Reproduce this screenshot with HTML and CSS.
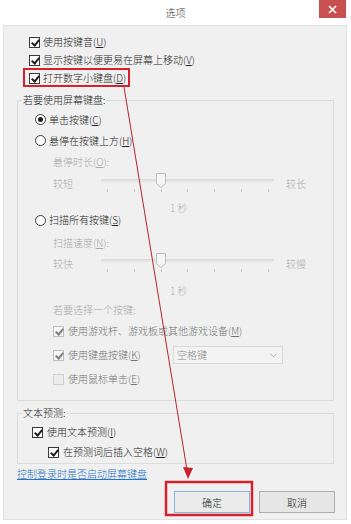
FILE: index.html
```html
<!DOCTYPE html>
<html>
<head>
<meta charset="utf-8">
<link rel="stylesheet" href="styles.css">
</head>
<body>
<div class="window">
  <div class="titlebar">
    <span class="title">选项</span>
    <div class="close"><svg width="9" height="9" viewBox="0 0 9 9"><path d="M1 1L8 8M8 1L1 8" stroke="#fff" stroke-width="1.6"/></svg></div>
  </div>
  <div class="client">
    <div class="topchecks">
      <div class="row"><span class="cb checked"></span>使用按键音(<u>U</u>)</div>
      <div class="row"><span class="cb checked"></span>显示按键以便更易在屏幕上移动(<u>V</u>)</div>
      <div class="row"><span class="cb checked"></span>打开数字小键盘(<u>D</u>)</div>
    </div>

    <fieldset class="group g1">
      <legend>若要使用屏幕键盘:</legend>
      <div class="row radio first"><span class="rb on"></span>单击按键(<u>C</u>)</div>
      <div class="row radio"><span class="rb"></span>悬停在按键上方(<u>H</u>)</div>
      <div class="row sublabel h22">悬停时长(<u>O</u>):</div>
      <div class="slider">
        <span class="end">较短</span>
        <div class="track-area">
          <div class="track"></div>
          <svg class="thumb" width="10" height="15" viewBox="0 0 10 15"><path d="M0.5 0.5H9.5V10.5L5 14.5L0.5 10.5Z" fill="#f6f6f6" stroke="#bcbcbc"/></svg>
          <div class="ticks"><i></i><i></i><i></i><i></i><i></i><i></i><i></i></div>
        </div>
        <span class="end right">较长</span>
      </div>
      <div class="sec">1 秒</div>
      <div class="row radio r3"><span class="rb"></span>扫描所有按键(<u>S</u>)</div>
      <div class="row sublabel h20 mt7">扫描速度(<u>N</u>):</div>
      <div class="slider">
        <span class="end">较快</span>
        <div class="track-area">
          <div class="track"></div>
          <svg class="thumb" width="10" height="15" viewBox="0 0 10 15"><path d="M0.5 0.5H9.5V10.5L5 14.5L0.5 10.5Z" fill="#f6f6f6" stroke="#bcbcbc"/></svg>
          <div class="ticks"><i></i><i></i><i></i><i></i><i></i><i></i><i></i></div>
        </div>
        <span class="end right">较慢</span>
      </div>
      <div class="sec mt3">1 秒</div>
      <div class="row sublabel h19 mt3">若要选择一个按键:</div>
      <div class="row dimcheck"><span class="cb dis checked"></span>使用游戏杆、游戏板或其他游戏设备(<u>M</u>)</div>
      <div class="row dimcheck"><span class="cb dis checked"></span><span class="kbtext">使用键盘按键(<u>K</u>)</span>
        <div class="dd"><span>空格键</span><svg width="7" height="5" viewBox="0 0 7 5"><path d="M0.5 0.8L3.5 3.8L6.5 0.8" fill="none" stroke="#a8a8a8"/></svg></div>
      </div>
      <div class="row dimcheck"><span class="cb dis"></span>使用鼠标单击(<u>E</u>)</div>
    </fieldset>

    <fieldset class="group g2">
      <legend>文本预测:</legend>
      <div class="row pred first"><span class="cb checked"></span>使用文本预测(<u>I</u>)</div>
      <div class="row pred indent"><span class="cb checked"></span>在预测词后插入空格(<u>W</u>)</div>
    </fieldset>

    <a class="link" href="#">控制登录时是否启动屏幕键盘</a>

    <div class="buttons">
      <button class="btn default">确定</button>
      <button class="btn">取消</button>
    </div>
  </div>

  <svg class="annot" width="351" height="524" viewBox="0 0 351 524">
    <rect x="24" y="69" width="105" height="17" fill="none" stroke="#d4222c" stroke-width="2"/>
    <rect x="166" y="482" width="86" height="33" fill="none" stroke="#d4222c" stroke-width="2.5"/>
    <line x1="124" y1="87" x2="187" y2="470" stroke="#b5262c" stroke-width="1"/>
    <polygon points="183,467 193,468 188,479" fill="#c8242c"/>
  </svg>
</div>
</body>
</html>
```
FILE: styles.css
```css
* { box-sizing: border-box; }
html, body { margin: 0; padding: 0; }
body {
  width: 351px;
  height: 524px;
  overflow: hidden;
  background: #fff;
  font-family: "Noto Sans CJK SC", "Microsoft YaHei", sans-serif;
  font-size: 10px;
  font-weight: 300;
  color: #1c1c1c;
}
u { text-decoration: underline; text-underline-offset: 1px; }
.window { position: relative; width: 351px; height: 524px; background: #fff; }
.titlebar {
  height: 25px;
  display: flex;
  align-items: center;
  justify-content: center;
  background: #fff;
  position: relative;
}
.title { font-size: 10px; color: #3a3a3a; line-height: 24px; }
.close {
  position: absolute;
  top: 0;
  right: 5px;
  width: 27px;
  height: 18px;
  background: #c85150;
  display: flex;
  align-items: center;
  justify-content: center;
}
.client {
  margin: 0 4px 0 3px;
  height: 495px;
  background: #f0f0f0;
  border: 1px solid #e1e1e1;
  padding: 7px 12px 0 13px;
}
.row { display: flex; align-items: center; white-space: nowrap; line-height: 14px; }
.topchecks { padding-left: 12px; }
.topchecks .row { height: 18px; }

.cb {
  flex: none;
  width: 11px;
  height: 11px;
  border: 1px solid #3a3a3a;
  background: #fff;
  margin-right: 3px;
  position: relative;
}
.cb.checked::after {
  content: "";
  position: absolute;
  left: 3px;
  top: 0px;
  width: 3px;
  height: 6px;
  border: solid #1e1e1e;
  border-width: 0 2px 2px 0;
  transform: rotate(40deg);
}
.cb.dis { border-color: #bdbdbd; background: #f7f7f7; }
.cb.dis.checked::after { border-color: #7c7c7c; }
.cb.dis:not(.checked) { background: #ececec; border-color: #d0d0d0; }

.rb {
  flex: none;
  width: 11px;
  height: 11px;
  border: 1px solid #3a3a3a;
  border-radius: 50%;
  background: #fff;
  margin-right: 3px;
  display: flex;
  align-items: center;
  justify-content: center;
}
.rb.on::after {
  content: "";
  width: 5px;
  height: 5px;
  border-radius: 50%;
  background: #1e1e1e;
}

.group {
  margin: 6px 0 0;
  padding: 0;
  border: 1px solid #dcdcdc;
  min-width: 0;
}
.group legend {
  margin-left: 4px;
  padding: 0 1px;
  line-height: 14px;
  height: 14px;
  color: #1c1c1c;
}
.g1 { padding-bottom: 9px; }
.radio { height: 21px; padding-left: 17px; }
.radio.first { margin-top: 2px; }
.radio.r3 { height: 12px; }
.sublabel { padding-left: 35px; color: #a9a9a9; }
.h22 { height: 22px; }
.h20 { height: 20px; }
.h19 { height: 19px; }
.mt7 { margin-top: 7px; }
.mt3 { margin-top: 3px; }

.slider {
  height: 29px;
  padding-left: 35px;
  display: grid;
  grid-template-columns: 48px 173px auto;
  align-items: start;
}
.slider .end { line-height: 22px; color: #a9a9a9; }
.slider .end.right { margin-left: 12px; }
.track-area { position: relative; height: 29px; }
.track {
  margin-top: 6px;
  height: 3px;
  background: #e4e4e4;
  border-top: 1px solid #dadada;
}
.thumb { position: absolute; left: 55px; top: 0; }
.ticks {
  margin-top: 7px;
  height: 3px;
  padding: 0 5px 0 6px;
  display: flex;
  justify-content: space-between;
}
.ticks i { width: 1px; height: 3px; background: #c4c4c4; }
.sec { height: 12px; line-height: 12px; padding-left: 152px; color: #b0b0b0; }

.dimcheck { height: 24px; padding-left: 35px; color: #747474; }
.dimcheck .cb { margin-right: 4px; }
.kbtext { width: 105px; flex: none; }
.dd {
  width: 110px;
  height: 18px;
  border: 1px solid #d8d8d8;
  background: #f3f3f3;
  display: flex;
  align-items: center;
  justify-content: space-between;
  padding: 0 5px 0 3px;
  color: #8a8a8a;
}

.g2 { margin-top: 5px; padding-bottom: 1px; }
.pred { height: 20px; padding-left: 14px; }
.pred .cb { margin-right: 4px; }
.pred.first { margin-top: 2px; }
.pred.indent { padding-left: 30px; }

.link {
  display: block;
  margin-top: 1px;
  line-height: 18px;
  height: 18px;
  color: #2672c6;
  text-decoration: underline;
  text-underline-offset: 1px;
  width: max-content;
}
.buttons {
  margin-top: 8px;
  margin-right: -1px;
  display: flex;
  justify-content: flex-end;
  gap: 9px;
}
.btn {
  width: 76px;
  height: 22px;
  border: 1px solid #adadad;
  background: #e6e6e6;
  font-family: inherit;
  font-size: 10px;
  font-weight: 300;
  color: #222;
  padding: 0;
}
.btn.default { border-color: #86b7e6; background: #ebebeb; }
.annot { position: absolute; left: 0; top: 0; pointer-events: none; }
```
